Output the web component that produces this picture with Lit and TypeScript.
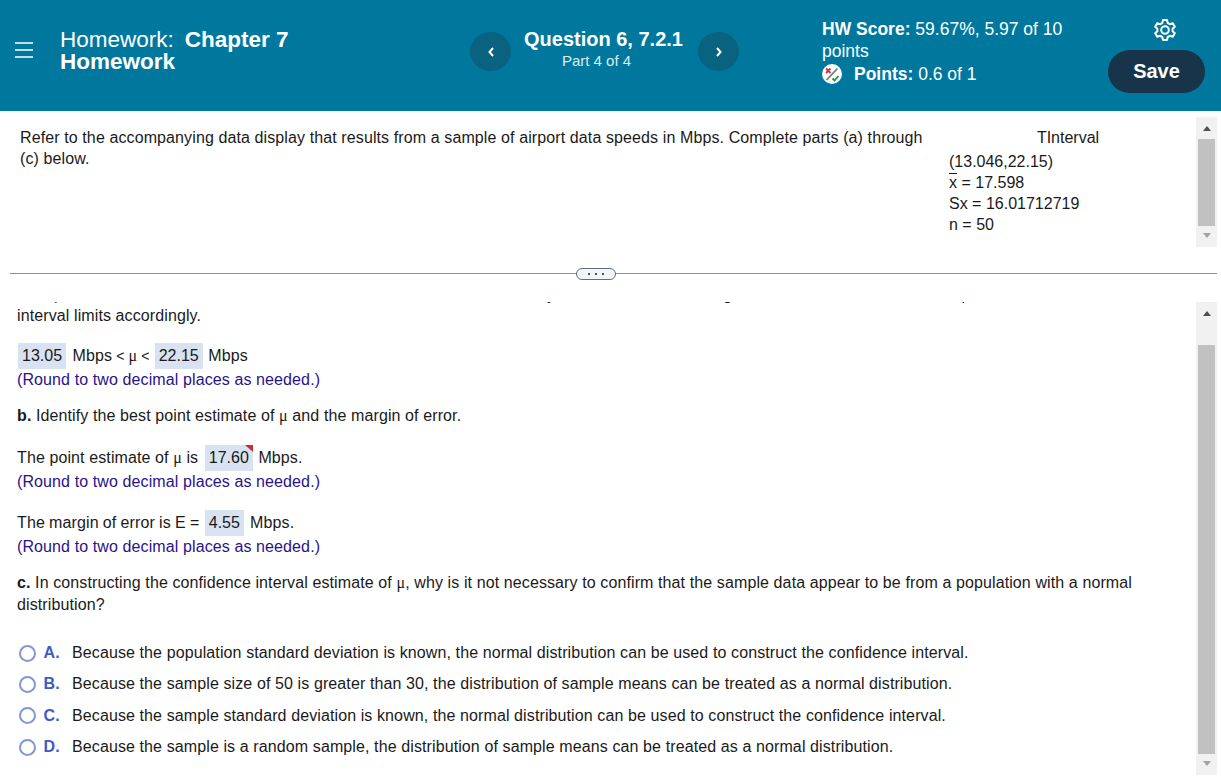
import { LitElement, html, css } from "lit";
import { customElement, property } from "lit/decorators.js";

@customElement("fake-scrollbar")
class FakeScrollbar extends LitElement {
  @property({ type: Number }) thumb = 100;
  @property({ type: Number }) offset = 0;

  static styles = css`
    :host {
      display: flex;
      flex-direction: column;
      padding: 3px 2px;
      background: #f1f1f1;
      box-sizing: border-box;
      width: 21px;
    }
    .end {
      height: 17px;
      flex: none;
      display: flex;
      align-items: center;
      justify-content: center;
    }
    .up {
      width: 0;
      height: 0;
      border-left: 4.5px solid transparent;
      border-right: 4.5px solid transparent;
      border-bottom: 5px solid #505050;
    }
    .down {
      width: 0;
      height: 0;
      border-left: 4.5px solid transparent;
      border-right: 4.5px solid transparent;
      border-top: 5px solid #a3a3a3;
    }
    .track {
      flex: 1;
    }
    .thumb {
      background: #c1c1c1;
    }
  `;

  render() {
    return html`
      <div class="end"><div class="up"></div></div>
      <div class="track">
        <div class="thumb" style="height:${this.thumb}px;margin-top:${this.offset}px"></div>
      </div>
      <div class="end"><div class="down"></div></div>
    `;
  }
}

@customElement("app-root")
class AppRoot extends LitElement {
  static styles = css`
    :host {
      display: block;
      width: 1221px;
      height: 781px;
      overflow: hidden;
      background: #fff;
      font-family: "Liberation Sans", Arial, sans-serif;
      font-size: 16px;
      color: #1a1a1a;
    }
    header {
      height: 111px;
      background: #00789e;
      color: #fff;
      display: flex;
    }
    .menu {
      width: 60px;
      flex: none;
      padding: 42px 0 0 15px;
      box-sizing: border-box;
    }
    .menu svg {
      display: block;
    }
    .title {
      width: 410px;
      flex: none;
      padding-top: 29px;
      box-sizing: border-box;
      font-size: 22.5px;
      line-height: 22px;
    }
    .title b {
      margin-left: 11px;
    }
    .title .second {
      font-weight: bold;
    }
    .nav {
      width: 41px;
      height: 39px;
      margin-top: 32px;
      flex: none;
      border-radius: 50%;
      background: #09627f;
      display: flex;
      align-items: center;
      justify-content: center;
    }
    .question {
      width: 187px;
      flex: none;
      padding: 28px 2px 0 0;
      box-sizing: border-box;
      text-align: center;
    }
    .question .name {
      font-size: 20px;
      font-weight: bold;
      line-height: 22px;
    }
    .question .part {
      font-size: 15px;
      line-height: 22px;
      color: #dcecf2;
      padding-right: 14px;
    }
    .score {
      width: 260px;
      margin-left: 83px;
      flex: none;
      padding-top: 18px;
      box-sizing: border-box;
      font-size: 17.5px;
      line-height: 22px;
    }
    .score .pts {
      display: flex;
      align-items: center;
      gap: 12px;
      margin-top: 1px;
    }
    .side {
      margin-left: 26px;
      width: 97px;
      flex: none;
      display: flex;
      flex-direction: column;
      align-items: center;
      padding-top: 18px;
      box-sizing: border-box;
    }
    .gear {
      display: block;
      margin-left: 17px;
    }
    .save {
      margin-top: 8px;
      width: 97px;
      height: 43px;
      border-radius: 22px;
      background: #17344a;
      color: #fff;
      font-size: 20px;
      font-weight: bold;
      display: flex;
      align-items: center;
      justify-content: center;
    }

    .top {
      height: 162px;
      display: flex;
    }
    .intro {
      width: 949px;
      flex: none;
      padding: 16px 20px 0 20px;
      box-sizing: border-box;
      line-height: 21px;
      letter-spacing: 0.107px;
    }
    .data {
      width: 247px;
      flex: none;
      padding-top: 16px;
      box-sizing: border-box;
      line-height: 21px;
    }
    .data .head {
      width: 238px;
      text-align: center;
    }
    .data .rows {
      margin-top: 3px;
    }
    .bar {
      text-decoration: overline;
    }
    .top fake-scrollbar {
      height: 130px;
      margin-top: 6px;
    }

    .divider {
      height: 1px;
      margin: 0 4px 0 10px;
      background: #8a8f9c;
      display: flex;
      align-items: center;
      justify-content: center;
      position: relative;
      z-index: 1;
    }
    .grip {
      width: 40px;
      height: 12px;
      flex: none;
      box-sizing: border-box;
      border: 1.5px solid #5f6f80;
      border-radius: 6px;
      background: #f3f5f8;
      display: flex;
      align-items: center;
      justify-content: center;
      gap: 5px;
      margin-left: -35px;
    }
    .grip i {
      width: 2px;
      height: 2px;
      background: #4a5060;
    }

    .bottom {
      height: 502px;
      display: flex;
    }
    .clip {
      width: 1196px;
      flex: none;
      height: 502px;
      box-sizing: border-box;
      padding-top: 28px;
    }
    .pane {
      height: 474px;
      overflow: hidden;
    }
    .content {
      margin-top: -18px;
      padding: 0 20px 0 17px;
      line-height: 22px;
      letter-spacing: 0.107px;
    }
    .first {
      line-height: 21px;
    }
    .g14 {
      height: 14px;
    }
    .g16 {
      height: 17px;
    }
    .g17 {
      height: 17px;
    }
    .g18 {
      height: 18px;
    }
    .mu {
      font-family: "Liberation Serif", serif;
    }
    .lt {
      font-size: 14px;
      margin: 0 -0.5px;
    }
    .tight {
      word-spacing: -0.35px;
    }
    .hint {
      color: #2a128c;
    }
    .box {
      display: inline-block;
      background: #d8e2f0;
      padding: 0 4px;
      line-height: 26px;
      margin: 0 2px 0 1px;
      letter-spacing: 0;
      word-spacing: 0;
      position: relative;
    }
    .box.last {
      margin-right: 1px;
    }
    .box.wrong {
      margin: 0 1px 0 2px;
    }
    .box.wrong::after {
      content: "";
      position: absolute;
      top: 0;
      right: 0;
      border-top: 7px solid #cf2a30;
      border-left: 8px solid transparent;
    }
    .answers {
      margin-top: 26px;
      display: flex;
      flex-direction: column;
      gap: 9.4px;
    }
    .answer {
      display: flex;
      align-items: center;
      height: 22px;
    }
    .radio {
      width: 17px;
      height: 17px;
      box-sizing: border-box;
      margin: 0 7.5px 0 2px;
      border: 2px solid #8396d8;
      border-radius: 50%;
      flex: none;
    }
    .letter {
      width: 28.5px;
      flex: none;
      font-weight: bold;
      color: #3f5bc4;
    }
    .bottom fake-scrollbar {
      height: 473px;
      margin-top: 28px;
    }
  `;

  answers = [
    ["A.", "Because the population standard deviation is known, the normal distribution can be used to construct the confidence interval."],
    ["B.", "Because the sample size of 50 is greater than 30, the distribution of sample means can be treated as a normal distribution."],
    ["C.", "Because the sample standard deviation is known, the normal distribution can be used to construct the confidence interval."],
    ["D.", "Because the sample is a random sample, the distribution of sample means can be treated as a normal distribution."],
  ];

  render() {
    return html`
      <header>
        <div class="menu">
          <svg width="18" height="16" viewBox="0 0 18 16" stroke="#fff" stroke-width="1.5">
            <path d="M0 1h18M0 8h18M0 15h18" />
          </svg>
        </div>
        <div class="title">Homework:<b>Chapter 7</b><div class="second">Homework</div></div>
        <div class="nav">
          <svg width="8" height="12" viewBox="0 0 8 12" fill="none" stroke="#fff" stroke-width="2">
            <path d="M6 2L2.500 6 6 10" />
          </svg>
        </div>
        <div class="question">
          <div class="name">Question 6, 7.2.1</div>
          <div class="part">Part 4 of 4</div>
        </div>
        <div class="nav">
          <svg width="8" height="12" viewBox="0 0 8 12" fill="none" stroke="#fff" stroke-width="2">
            <path d="M2 2L5.500 6 2 10" />
          </svg>
        </div>
        <div class="score">
          <div><b>HW Score:</b> 59.67%, 5.97 of 10 points</div>
          <div class="pts">
            <svg width="20" height="20" viewBox="0 0 20 20" fill="none">
              <circle cx="10" cy="10" r="10" fill="#fff" />
              <path d="M4 4.500l4.500 4.500M8.500 4.500L4 9" stroke="#d0343c" stroke-width="1.800" />
              <path d="M4.500 16L15.500 4.500" stroke="#777" stroke-width="1.800" />
              <path d="M10.500 14.500l2 2 4-4.500" stroke="#1a9a4a" stroke-width="1.800" />
            </svg>
            <span><b>Points:</b> 0.6 of 1</span>
          </div>
        </div>
        <div class="side">
          <svg class="gear" width="24" height="24" viewBox="0 0 24 24" fill="none" stroke="#fff" stroke-width="2" stroke-linejoin="round">
            <path d="M10 2h4l.7 3 2.200 1.200 2.900-.9 2 3.400-2.200 2.100v2.400l2.200 2.100-2 3.400-2.900-.9-2.200 1.200-.7 3h-4l-.7-3-2.200-1.200-2.900.9-2-3.400 2.200-2.100v-2.400L2.200 8.700l2-3.400 2.900.9L9.300 5z" />
            <circle cx="12" cy="12" r="3.800" />
          </svg>
          <div class="save">Save</div>
        </div>
      </header>

      <div class="top">
        <div class="intro">
          Refer to the accompanying data display that results from a sample of airport data speeds in Mbps. Complete parts (a) through (c) below.
        </div>
        <div class="data">
          <div class="head">TInterval</div>
          <div class="rows">
            <div>(13.046,22.15)</div>
            <div><span class="bar">x</span> = 17.598</div>
            <div>Sx = 16.01712719</div>
            <div>n = 50</div>
          </div>
        </div>
        <fake-scrollbar thumb="87" offset="2"></fake-scrollbar>
      </div>

      <div class="divider">
        <div class="grip"><i></i><i></i><i></i></div>
      </div>

      <div class="bottom">
        <div class="clip">
          <div class="pane">
            <div class="content">
              <div class="first">
                <b>a.</b> Express the confidence interval in the format that uses the "less than" symbol. Given that the original listed data use two decimal places, round the confidence
                interval limits accordingly.
              </div>
              <div class="g16"></div>
              <div>
                <span class="box">13.05</span> Mbps <span class="lt">&lt;</span> <span class="mu">μ</span> <span class="lt">&lt;</span> <span class="box last">22.15</span> Mbps
              </div>
              <div class="hint">(Round to two decimal places as needed.)</div>
              <div class="g14"></div>
              <div><b>b.</b> Identify the best point estimate of <span class="mu">μ</span> and the margin of error.</div>
              <div class="g18"></div>
              <div>The point estimate of <span class="mu">μ</span> is <span class="box wrong">17.60</span> Mbps.</div>
              <div class="hint">(Round to two decimal places as needed.)</div>
              <div class="g17"></div>
              <div class="tight">The margin of error is E = <span class="box">4.55</span> Mbps.</div>
              <div class="hint">(Round to two decimal places as needed.)</div>
              <div class="g14"></div>
              <div>
                <b>c.</b> In constructing the confidence interval estimate of <span class="mu">μ</span>, why is it not necessary to confirm that the sample data appear to be from a population with a normal distribution?
              </div>
              <div class="answers">
                ${this.answers.map(
                  ([l, t]) => html`<div class="answer"><span class="radio"></span><span class="letter">${l}</span><span>${t}</span></div>`
                )}
              </div>
            </div>
          </div>
        </div>
        <fake-scrollbar thumb="409" offset="23"></fake-scrollbar>
      </div>
    `;
  }
}

export { FakeScrollbar, AppRoot };
